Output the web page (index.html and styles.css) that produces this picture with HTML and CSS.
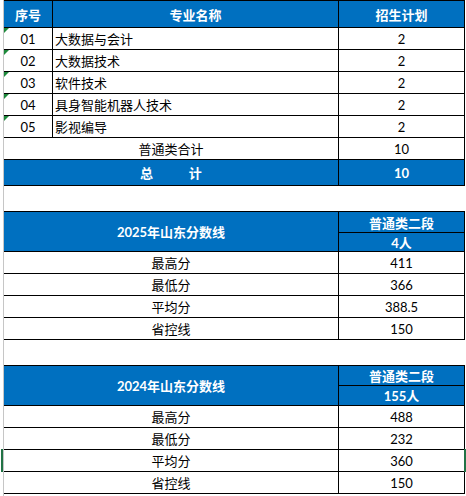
FILE: index.html
```
<!DOCTYPE html>
<html lang="zh-CN">
<head>
  <meta charset="UTF-8">
  <meta name="viewport" content="width=device-width, initial-scale=1.0">
  <title>招生计划</title>
  <link rel="stylesheet" href="styles.css">
</head>
<body>

  <div class="sheet">

      <!-- 招生计划 -->
      <div class="plan">
          <div class="cell head">序号</div>
          <div class="cell head">专业名称</div>
          <div class="cell head">招生计划</div>

          <div class="cell num">01</div>
          <div class="cell name">大数据与会计</div>
          <div class="cell">2</div>

          <div class="cell num">02</div>
          <div class="cell name">大数据技术</div>
          <div class="cell">2</div>

          <div class="cell num">03</div>
          <div class="cell name">软件技术</div>
          <div class="cell">2</div>

          <div class="cell num">04</div>
          <div class="cell name">具身智能机器人技术</div>
          <div class="cell">2</div>

          <div class="cell num">05</div>
          <div class="cell name">影视编导</div>
          <div class="cell">2</div>

          <div class="cell span2">普通类合计</div>
          <div class="cell">10</div>

          <div class="cell span2 total">总&emsp;&emsp;&emsp;&ensp;计</div>
          <div class="cell total">10</div>
      </div>

      <div class="gap"></div>

      <!-- 2025 -->
      <div class="score">
          <div class="cell title">2025年山东分数线</div>
          <div class="cell sub top">普通类二段</div>
          <div class="cell sub bottom">4人</div>

          <div class="cell">最高分</div>
          <div class="cell">411</div>
          <div class="cell">最低分</div>
          <div class="cell">366</div>
          <div class="cell">平均分</div>
          <div class="cell">388.5</div>
          <div class="cell">省控线</div>
          <div class="cell">150</div>
      </div>

      <div class="gap"></div>

      <!-- 2024 -->
      <div class="score last">
          <div class="cell title">2024年山东分数线</div>
          <div class="cell sub top">普通类二段</div>
          <div class="cell sub bottom">155人</div>

          <div class="cell">最高分</div>
          <div class="cell">488</div>
          <div class="cell">最低分</div>
          <div class="cell">232</div>
          <div class="cell selected">平均分</div>
          <div class="cell selected-end">360</div>
          <div class="cell">省控线</div>
          <div class="cell">150</div>
      </div>

  </div>

</body>
</html>
```

FILE: styles.css
```
* {
  margin: 0;
  padding: 0;
  box-sizing: border-box;
}

body {
  font-family: Lato, "Noto Sans CJK SC", sans-serif;
  font-size: 13px;
  color: #000;
  background-color: #fff;
  width: 466px;
  height: 496px;
  overflow: hidden;
}

.sheet {
  margin-left: 3px;
  border-left: 1px solid #c6c6c6;
  height: 496px;
  width: 462px;
}

.cell {
  display: flex;
  align-items: center;
  justify-content: center;
  border-right: 1px solid #000;
  border-bottom: 1px solid #000;
  height: 22px;
  position: relative;
  white-space: nowrap;
}

/* plan table */
.plan {
  display: grid;
  grid-template-columns: 49px 286px 126px;
  border-top: 1px solid #000;
}

.plan .head {
  height: 27px;
  background-color: #0070c0;
  color: #fff;
  font-weight: bold;
}

.plan .name {
  justify-content: flex-start;
  padding-left: 2px;
}

.plan .num::before {
  content: "";
  position: absolute;
  top: 0;
  left: 0;
  border-top: 5px solid #1e8a3c;
  border-right: 5px solid transparent;
}

.plan .span2 {
  grid-column: span 2;
}

.plan .total {
  height: 26px;
  background-color: #0070c0;
  color: #fff;
  font-weight: bold;
}

.gap {
  height: 25px;
}

/* score tables */
.score {
  display: grid;
  grid-template-columns: 335px 126px;
  border-top: 1px solid #000;
}

.score .title {
  grid-row: span 2;
  height: auto;
  background-color: #0070c0;
  color: #fff;
  font-weight: bold;
}

.score .sub {
  background-color: #0070c0;
  color: #fff;
  font-weight: bold;
}

.score .top {
  height: 21px;
}

.score .bottom {
  height: 19px;
}

.score.last .top,
.score.last .bottom {
  height: 20px;
}

.selected::before {
  content: "";
  position: absolute;
  left: -3px;
  top: -1px;
  bottom: -1px;
  width: 2px;
  background-color: #217346;
}

.selected-end::after {
  content: "";
  position: absolute;
  right: -2px;
  top: -1px;
  bottom: -1px;
  width: 2px;
  background-color: #217346;
}
```
